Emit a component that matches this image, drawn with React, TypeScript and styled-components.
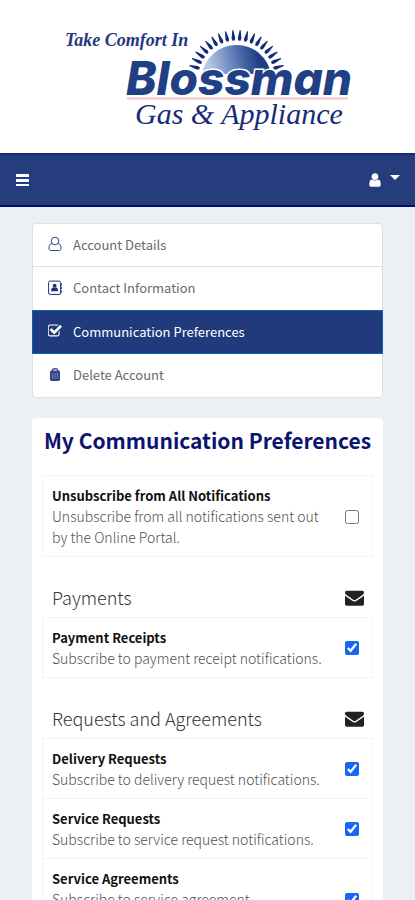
import React from "react";
import styled, { createGlobalStyle } from "styled-components";

const GlobalStyle = createGlobalStyle`
  * { box-sizing: border-box; }
  body {
    margin: 0;
    background: #ecf0f3;
    color: #000;
    font-family: "Noto Sans CJK SC", "Noto Sans", sans-serif;
    font-size: 14px;
    line-height: 21px;
  }
`;

const Brand = styled.header`
  display: flex;
  justify-content: center;
  height: 153px;
  background: #fff;
`;

const LogoDrawing = styled.svg`
  display: block;
  width: 415px;
  height: 153px;
  flex: none;
`;

const NavBar = styled.nav`
  display: flex;
  align-items: center;
  justify-content: space-between;
  height: 54px;
  padding: 0 15px;
  background: #253d7d;
  border-top: 2px solid #1b2b6e;
  border-bottom: 2px solid #000e66;
`;

const NavButton = styled.button`
  display: flex;
  align-items: center;
  gap: 7px;
  padding: 0;
  border: 0;
  background: none;
  color: #fff;
  cursor: pointer;
`;

const Caret = styled.span`
  margin-bottom: 6px;
  border: 5px solid transparent;
  border-top-color: #fff;
  border-bottom: 0;
`;

const Content = styled.main`
  display: flex;
  flex-direction: column;
  gap: 20px;
  height: calc(100vh - 207px);
  padding: 16px 32px 0;
  overflow: hidden;
`;

const Menu = styled.div`
  flex: none;
  border: 1px solid #dcdfe3;
  border-radius: 4px;
  background: #fff;
`;

const MenuLink = styled.a<{ $active?: boolean }>`
  display: flex;
  align-items: center;
  gap: 11px;
  height: ${(p) => (p.$active ? 44 : 43)}px;
  margin: ${(p) => (p.$active ? "0 -1px" : "0")};
  padding: 0 15px 2px;
  border: solid ${(p) => (p.$active ? "#0b62b5" : "#dcdfe3")};
  border-width: ${(p) => (p.$active ? "1px" : "0")};
  background: ${(p) => (p.$active ? "#213a7c" : "transparent")};
  color: ${(p) => (p.$active ? "#fff" : "#6a6a6a")};
  font-size: 13px;
  text-decoration: none;

  &:first-child { border-bottom-width: 1px; }

  svg { color: ${(p) => (p.$active ? "#fff" : "#23307c")}; }
`;

const Card = styled.section`
  flex: none;
  padding: 7px 10px;
  border-radius: 4px;
  background: #fff;
`;

const Title = styled.h1`
  margin: 0;
  color: #0b1470;
  font-size: 21px;
  line-height: 30px;
  font-weight: 700;
  text-align: center;
  white-space: nowrap;
`;

const Group = styled.section`
  padding-top: 20px;
`;

const GroupHeading = styled.div`
  display: flex;
  align-items: center;
  justify-content: space-between;
  height: 40px;
  padding: 0 9px 0 10px;
  color: #222;
`;

const GroupTitle = styled.h2`
  margin: 0;
  color: #333;
  font-size: 18px;
  font-weight: 300;
`;

const Options = styled.div`
  border: 1px solid #f3f4f6;
`;

const FirstOptions = styled(Options)`
  margin-top: 20px;
`;

const Option = styled.label`
  display: flex;
  align-items: center;
  justify-content: space-between;
  gap: 16px;
  padding: 9px 13px 8px 9px;
  cursor: pointer;

  & + & { border-top: 1px solid #f3f4f6; }
`;

const OptionName = styled.strong`
  display: block;
  color: #111;
  font-size: 13px;
  font-weight: 700;
`;

const OptionText = styled.span`
  display: block;
  color: #505050;
  font-weight: 300;
`;

const Tick = styled.input`
  flex: none;
  width: 14px;
  height: 14px;
  margin: 0;
  accent-color: #1668f2;
`;

const PERSON =
  "M1536 1399q0 109-62.5 187t-150.5 78h-854q-88 0-150.5-78t-62.5-187q0-85 8.5-160.5t31.5-152 58.5-131 94-89 134.5-34.5q131 128 313 128t313-128q76 0 134.5 34.5t94 89 58.5 131 31.5 152 8.5 160.5zm-256-887q0 159-112.5 271.5t-271.5 112.5-271.5-112.5-112.5-271.5 112.5-271.5 271.5-112.5 271.5 112.5 112.5 271.5z";

const UserIcon = () => (
  <svg width="16" height="16" viewBox="0 0 1792 1792" fill="currentColor" aria-hidden="true">
    <path d={PERSON} />
  </svg>
);

const UserOutlineIcon = () => (
  <svg width="14" height="16" viewBox="0 0 14 16" fill="none" stroke="currentColor" strokeWidth=".9" aria-hidden="true">
    <circle cx="7" cy="5" r="3.8" />
    <path d="M3.9 7.4C1.8 7.8 1 9.8 1 12.3c0 1.4.8 2.2 2 2.2h8c1.2 0 2-.8 2-2.2 0-2.5-.8-4.5-2.9-4.9" />
  </svg>
);

const ContactIcon = () => (
  <svg width="14" height="16" viewBox="0 0 14 16" aria-hidden="true">
    <rect x=".6" y="1.1" width="12" height="13.3" rx="1.5" fill="none" stroke="currentColor" />
    <path d="M13.4 3.5v2M13.4 7v2M13.4 10.5v2" stroke="currentColor" />
    <circle cx="6.6" cy="5.7" r="1.9" fill="currentColor" />
    <path d="M3.1 11.3c0-2.3.8-3.6 2-3.7h3c1.2.1 2 1.4 2 3.7z" fill="currentColor" />
  </svg>
);

const CheckIcon = () => (
  <svg width="14" height="16" viewBox="100 0 1650 1792" fill="currentColor" aria-hidden="true">
    <path d="M1472 930v318q0 119-84.5 203.5t-203.5 84.5h-832q-119 0-203.5-84.5t-84.5-203.5v-832q0-119 84.5-203.5t203.5-84.5h832q63 0 117 25 15 7 18 23 3 17-9 29l-49 49q-10 10-23 10-3 0-9-2-23-6-45-6h-832q-66 0-113 47t-47 113v832q0 66 47 113t113 47h832q66 0 113-47t47-113v-254q0-13 9-22l64-64q10-10 23-10 6 0 12 3 20 8 20 29zm231-489l-814 814q-24 24-57 24t-57-24l-430-430q-24-24-24-57t24-57l110-110q24-24 57-24t57 24l263 263 647-647q24-24 57-24t57 24l110 110q24 24 24 57t-24 57z" />
  </svg>
);

const BinIcon = () => (
  <svg width="14" height="16" viewBox="0 0 14 16" fill="none" aria-hidden="true">
    <path d="M4.5 3.8V2.9c0-.7.5-1.1 1.2-1.1h2.6c.7 0 1.2.4 1.2 1.1v.9" stroke="currentColor" strokeWidth="1.2" />
    <rect x="2" y="3.4" width="10" height="10.6" rx="1.4" fill="currentColor" opacity=".9" />
    <path d="M4.7 6.2v5.6M7 6.2v5.6M9.3 6.2v5.6" stroke="#8b93bd" strokeWidth=".8" />
  </svg>
);

const BarsIcon = () => (
  <svg width="15" height="14" viewBox="0 0 15 14" fill="currentColor" aria-hidden="true">
    <rect x="1" y="1" width="13" height="3" rx=".5" />
    <rect x="1" y="6" width="13" height="3" rx=".5" />
    <rect x="1" y="11" width="13" height="2" rx=".5" />
  </svg>
);

const EnvelopeIcon = () => (
  <svg width="19" height="19" viewBox="0 0 1792 1792" fill="currentColor" role="img" aria-label="Email">
    <path d="M1792 710v794q0 66-47 113t-113 47h-1472q-66 0-113-47t-47-113v-794q44 49 101 87 362 246 497 345 57 42 92.5 65.5t94.5 48 110 24.5h2q51 0 110-24.5t94.5-48 92.5-65.5q170-123 498-345 57-39 100-87zm0-294q0 79-49 151t-122 123q-376 261-468 325-10 7-42.5 31t-54 38.5-52 32.5-57.5 27-50 9h-2q-23 0-50-9t-57.5-27-52-32.5-54-38.5-42.5-31q-91-64-262-182.5t-205-142.5q-62-42-117-115.5t-55-136.5q0-78 41.5-130t118.5-52h1472q65 0 112.5 47t47.5 113z" />
  </svg>
);

const RAY_COUNT = 18;
const RAY_STEP = 8.7;
const RAYS = Array.from({ length: RAY_COUNT }, (_, i) => (i - (RAY_COUNT - 1) / 2) * RAY_STEP);

const Logo = () => (
  <LogoDrawing viewBox="0 0 415 153" role="img" aria-label="Take Comfort In Blossman Gas & Appliance">
    <defs>
      <linearGradient id="sun" x1="0" y1="0.3" x2="1" y2="0.2">
        <stop offset="0.05" stopColor="#b7cae6" />
        <stop offset="0.5" stopColor="#5272b0" />
        <stop offset="0.8" stopColor="#1f3d86" />
      </linearGradient>
    </defs>
    <path d="M202 74A35 35 0 0 1 271 74Z" fill="url(#sun)" />
    {RAYS.map((angle) => (
      <path key={angle} d="M236 30H237L238.3 38L237.6 40.5H235.4L234.7 38Z" fill="#14287a" transform={`rotate(${angle} 236.5 79)`} />
    ))}
    <text x="65" y="46" fontFamily="Liberation Serif" fontStyle="italic" fontWeight="700" fontSize="18" fill="#26367f">Take Comfort In</text>
    <text x="126" y="95" fontFamily="Inter" fontStyle="italic" fontWeight="800" fontSize="46" fill="#213f85" stroke="#fff" strokeWidth="3" paintOrder="stroke">Blossman</text>
    <path d="M127 98.5H348" stroke="#f6cccf" strokeWidth="2.5" />
    <text x="135" y="124" fontFamily="Liberation Serif" fontStyle="italic" fontSize="30" fill="#172b78">Gas &amp; Appliance</text>
  </LogoDrawing>
);

type Item = { name: string; text: string; checked?: boolean };

const Preference = ({ name, text, checked }: Item) => (
  <Option>
    <span>
      <OptionName>{name}</OptionName>
      <OptionText>{text}</OptionText>
    </span>
    <Tick type="checkbox" defaultChecked={checked} />
  </Option>
);

const groups: { title: string; items: Item[] }[] = [
  {
    title: "Payments",
    items: [{ name: "Payment Receipts", text: "Subscribe to payment receipt notifications.", checked: true }],
  },
  {
    title: "Requests and Agreements",
    items: [
      { name: "Delivery Requests", text: "Subscribe to delivery request notifications.", checked: true },
      { name: "Service Requests", text: "Subscribe to service request notifications.", checked: true },
      { name: "Service Agreements", text: "Subscribe to service agreement notifications.", checked: true },
    ],
  },
];

export default function App() {
  return (
    <>
      <GlobalStyle />
      <Brand>
        <Logo />
      </Brand>
      <NavBar aria-label="Main">
        <NavButton type="button" aria-label="Open menu">
          <BarsIcon />
        </NavButton>
        <NavButton type="button" aria-label="Account menu">
          <UserIcon />
          <Caret />
        </NavButton>
      </NavBar>
      <Content>
        <Menu>
          <MenuLink href="#details"><UserOutlineIcon />Account Details</MenuLink>
          <MenuLink href="#contact"><ContactIcon />Contact Information</MenuLink>
          <MenuLink href="#preferences" $active aria-current="page"><CheckIcon />Communication Preferences</MenuLink>
          <MenuLink href="#delete"><BinIcon />Delete Account</MenuLink>
        </Menu>
        <Card>
          <Title>My Communication Preferences</Title>
          <FirstOptions>
            <Preference name="Unsubscribe from All Notifications" text="Unsubscribe from all notifications sent out by the Online Portal." />
          </FirstOptions>
          {groups.map((group) => (
            <Group key={group.title}>
              <GroupHeading>
                <GroupTitle>{group.title}</GroupTitle>
                <EnvelopeIcon />
              </GroupHeading>
              <Options>
                {group.items.map((item) => (
                  <Preference key={item.name} {...item} />
                ))}
              </Options>
            </Group>
          ))}
        </Card>
      </Content>
    </>
  );
}
